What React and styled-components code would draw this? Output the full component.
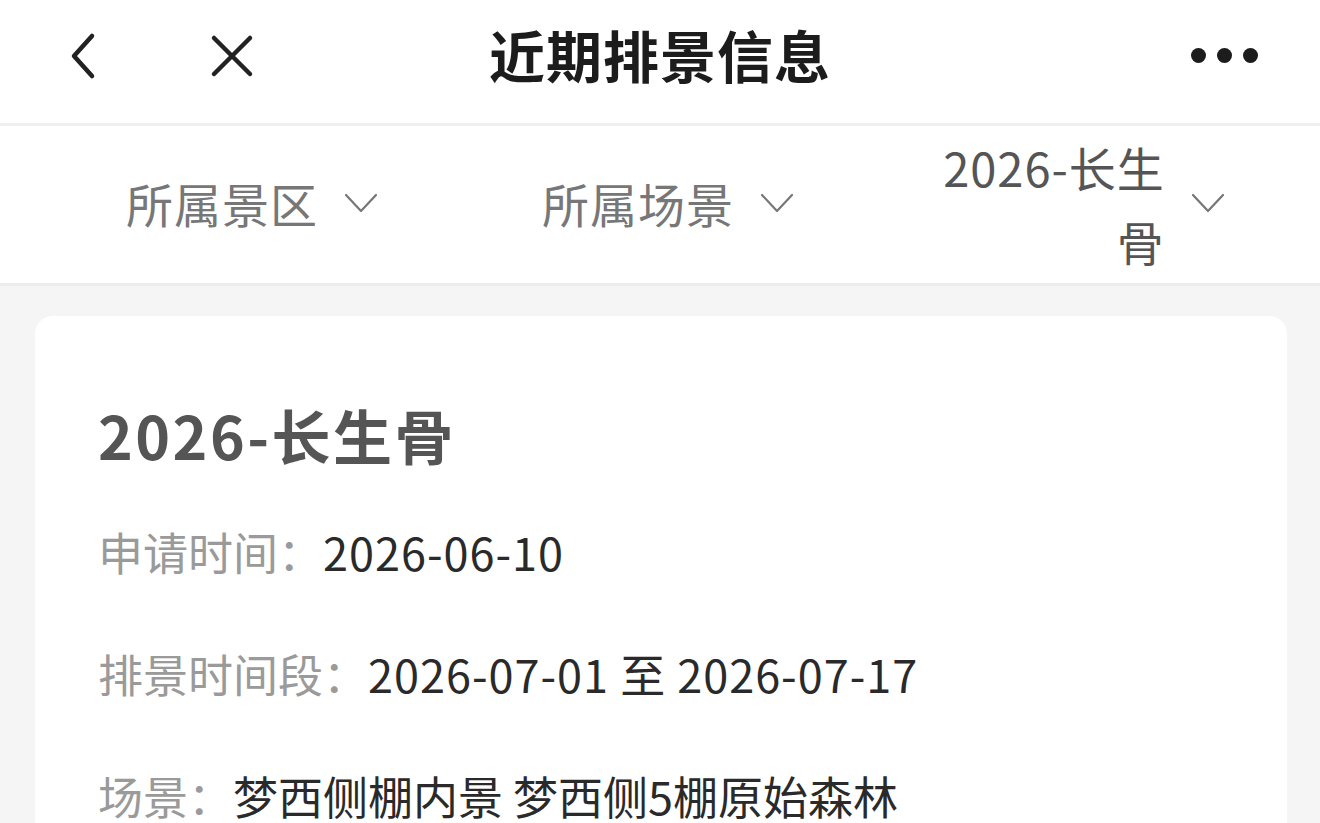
import React from 'react';
import styled, { createGlobalStyle } from 'styled-components';

const GlobalStyle = createGlobalStyle`
  html, body {
    margin: 0;
    padding: 0;
    background: #f5f5f5;
    font-family: "Noto Sans CJK SC", "Noto Sans", sans-serif;
  }
`;

const Page = styled.div`
  width: 1320px;
  height: 823px;
  background: #f5f5f5;
  overflow: hidden;
`;

const NavBar = styled.header`
  height: 123px;
  background: #fff;
  border-bottom: 3px solid #efefef;
  display: grid;
  grid-template-columns: 1fr auto 1fr;
  align-items: center;
`;

const NavLeft = styled.div`
  display: flex;
  align-items: center;
  gap: 112px;
  padding-left: 68px;
  padding-top: 4px;
`;

const NavTitle = styled.h1`
  margin: 0;
  font-size: 56px;
  font-weight: 700;
  color: #1c1c1c;
  letter-spacing: 1px;
  padding-bottom: 16px;
`;

const NavRight = styled.div`
  display: flex;
  justify-content: flex-end;
  gap: 11px;
  padding-right: 62px;
  padding-bottom: 12px;
`;

const Dot = styled.span`
  width: 15px;
  height: 15px;
  border-radius: 50%;
  background: #1c1c1c;
`;

const IconButton = styled.button`
  border: 0;
  background: none;
  padding: 0;
  display: flex;
  align-items: center;
  justify-content: center;
  margin-bottom: 16px;
`;

const FilterBar = styled.div`
  height: 157px;
  background: #fff;
  border-bottom: 3px solid #ededed;
  display: grid;
  grid-template-columns: repeat(3, 1fr);
  align-items: center;
  padding: 0 28px 0 44px;
`;

const Filter = styled.div`
  justify-self: center;
  display: flex;
  align-items: center;
  gap: 26px;
  font-size: 47px;
  line-height: 74px;
  letter-spacing: 1px;
  padding-bottom: 4px;
`;

const FilterLabel = styled.span`
  text-align: right;
  color: ${p => (p.$active ? '#555' : '#777')};
  padding-top: ${p => (p.$active ? '2px' : '0')};
`;

const Content = styled.main`
  padding: 30px 33px 0 35px;
`;

const Card = styled.section`
  background: #fff;
  border-radius: 18px;
  padding: 84px 63px 40px;
`;

const CardTitle = styled.h2`
  margin: 0;
  font-size: 59px;
  line-height: 70px;
  font-weight: 700;
  color: #555;
  letter-spacing: 2.5px;
`;

const Row = styled.div`
  margin-top: ${p => p.$gap || 62}px;
  font-size: 45px;
  line-height: 60px;
  white-space: nowrap;
`;

const Label = styled.span`
  color: #9a9a9a;
`;

const Value = styled.span`
  color: #2a2a2a;
  letter-spacing: ${p => (p.$numeric ? '1px' : '0')};
`;

const Chevron = () => (
  <svg width="34" height="22" viewBox="0 0 34 22" fill="none">
    <path d="M2 3 L17 19 L32 3" stroke="#777" strokeWidth="2.2" strokeLinecap="round" strokeLinejoin="round" />
  </svg>
);

const BackIcon = () => (
  <svg width="30" height="48" viewBox="0 0 30 48" fill="none">
    <path d="M24 4 L6 24 L24 44" stroke="#222" strokeWidth="4.5" strokeLinecap="round" strokeLinejoin="round" />
  </svg>
);

const CloseIcon = () => (
  <svg width="44" height="44" viewBox="0 0 44 44" fill="none">
    <path d="M4 4 L40 40 M40 4 L4 40" stroke="#222" strokeWidth="4.5" strokeLinecap="round" />
  </svg>
);

const App = () => {
  return (
    <Page>
      <GlobalStyle />
      <NavBar>
        <NavLeft>
          <IconButton aria-label="返回"><BackIcon /></IconButton>
          <IconButton aria-label="关闭"><CloseIcon /></IconButton>
        </NavLeft>
        <NavTitle>近期排景信息</NavTitle>
        <NavRight>
          <Dot />
          <Dot />
          <Dot />
        </NavRight>
      </NavBar>

      <FilterBar>
        <Filter>
          <FilterLabel>所属景区</FilterLabel>
          <Chevron />
        </Filter>
        <Filter>
          <FilterLabel>所属场景</FilterLabel>
          <Chevron />
        </Filter>
        <Filter>
          <FilterLabel $active>2026-长生<br />骨</FilterLabel>
          <Chevron />
        </Filter>
      </FilterBar>

      <Content>
        <Card>
          <CardTitle>2026-长生骨</CardTitle>
          <Row $gap={52}>
            <Label>申请时间：</Label>
            <Value $numeric>2026-06-10</Value>
          </Row>
          <Row>
            <Label>排景时间段：</Label>
            <Value $numeric>2026-07-01 至 2026-07-17</Value>
          </Row>
          <Row>
            <Label>场景：</Label>
            <Value>梦西侧棚内景 梦西侧5棚原始森林</Value>
          </Row>
        </Card>
      </Content>
    </Page>
  );
};

export default App;
